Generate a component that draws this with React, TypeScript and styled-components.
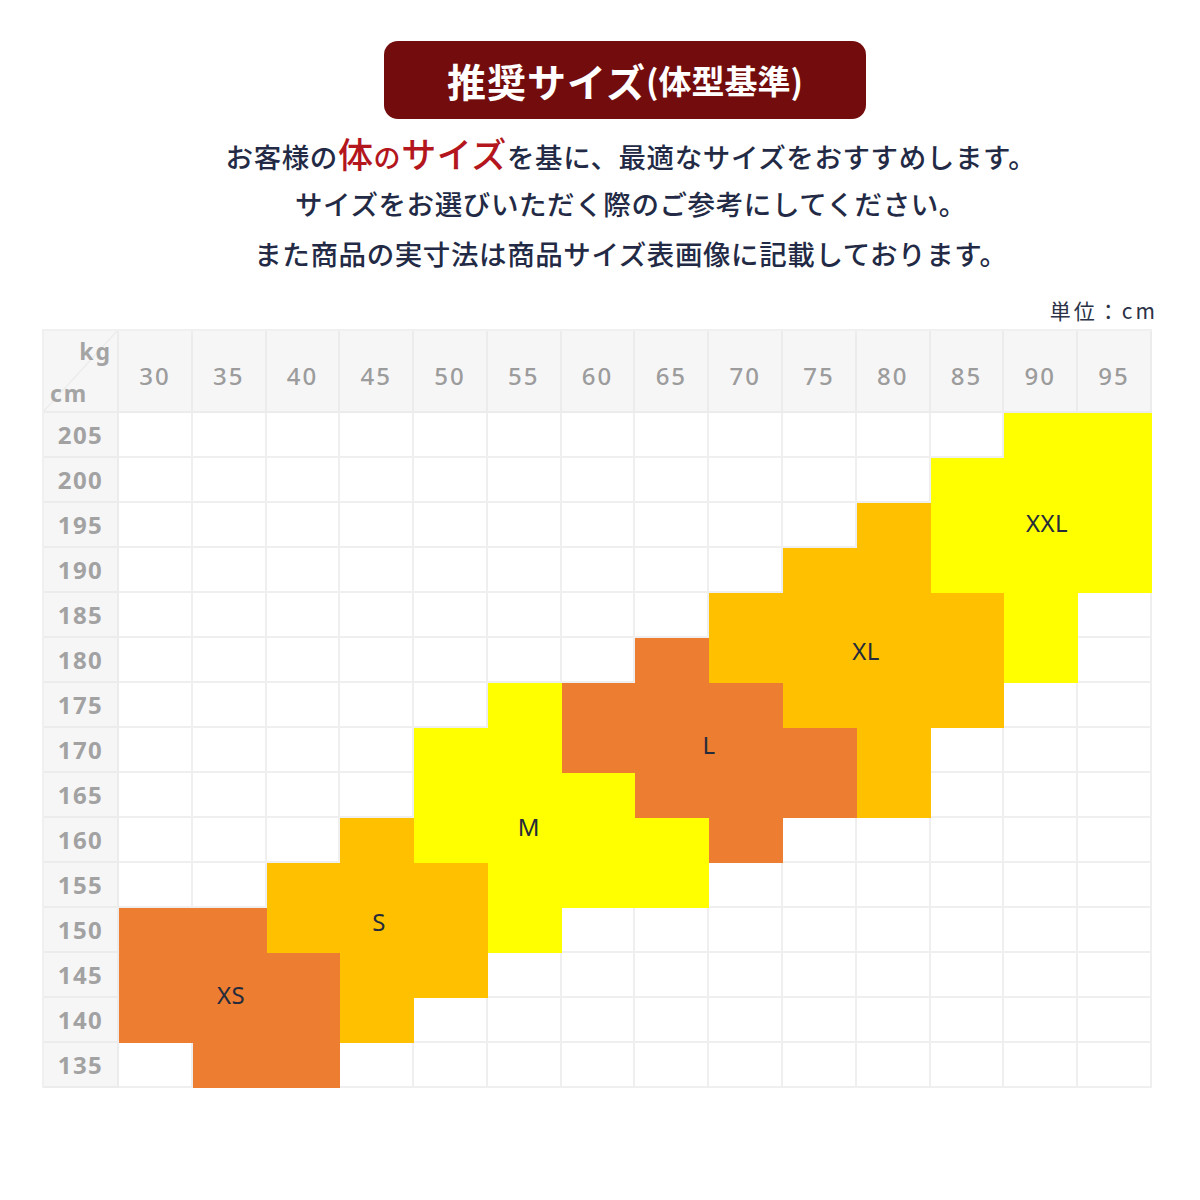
import React from "react";
import styled, { createGlobalStyle } from "styled-components";

const Global = createGlobalStyle`
  html, body { margin: 0; padding: 0; background: #ffffff; }
  body { font-family: "Noto Sans", "Noto Sans CJK JP", sans-serif; }
`;

const Page = styled.div`
  width: 1200px;
  height: 1200px;
  box-sizing: border-box;
  padding: 41px 0 0 42px;
  display: flex;
  flex-direction: column;
  align-items: flex-start;
  background: #fff;
`;

const Intro = styled.section`
  width: 1110px;
  padding-left: 56px;
  box-sizing: border-box;
  display: flex;
  flex-direction: column;
  align-items: center;
`;

const Banner = styled.h1`
  margin: 0;
  width: 482px;
  height: 78px;
  border-radius: 14px;
  background: #730d0d;
  color: #fff;
  display: flex;
  align-items: center;
  justify-content: center;
  font-family: "Noto Sans CJK JP", sans-serif;
  font-weight: 700;
  font-size: 39px;
  letter-spacing: 1px;
`;

const BannerSub = styled.span`
  font-size: 33px;
  letter-spacing: 0;
`;

const Lead = styled.div`
  margin-top: 9px;
  margin-left: 12px;
  display: flex;
  flex-direction: column;
  align-items: center;
`;

const Line = styled.p`
  margin: 0;
  height: 50px;
  line-height: 50px;
  font-family: "Noto Sans CJK JP", sans-serif;
  font-size: 27.5px;
  font-weight: 500;
  color: #232a45;
  letter-spacing: 0.6px;
  white-space: nowrap;
`;

const Emph = styled.span<{ $small?: boolean }>`
  color: #b3161d;
  font-size: ${(p) => (p.$small ? "27px" : "35px")};
  font-weight: 500;
`;

const UnitRow = styled.div`
  width: 1116px;
  margin-top: 20px;
  display: flex;
  justify-content: flex-end;
  font-family: "Noto Sans CJK JP", sans-serif;
  font-size: 21px;
  line-height: 24px;
  color: #2b3146;
  letter-spacing: 3px;
`;

const ChartWrap = styled.div`
  position: relative;
  margin-top: 7px;
  width: 1110px;
`;

const Grid = styled.div`
  display: grid;
  grid-template-columns: 75px repeat(14, 1fr);
  grid-template-rows: 82px repeat(15, 45px);
  border-top: 2px solid #f0f0f0;
  border-left: 2px solid #f0f0f0;
  box-sizing: border-box;
`;

const HeadCell = styled.div`
  background: #f6f6f7;
  border-right: 2px solid #ececec;
  border-bottom: 2px solid #ececec;
  display: flex;
  align-items: center;
  justify-content: center;
  font-size: 24px;
  font-weight: 500;
  color: #9c9c9c;
  letter-spacing: 2px;
  padding-top: 8px;
  box-sizing: border-box;
`;

const Corner = styled.div`
  position: relative;
  background: linear-gradient(
    to bottom right,
    #f6f6f7 calc(50% - 1px),
    #e8e8e8 50%,
    #f6f6f7 calc(50% + 1px)
  );
  border-right: 2px solid #ececec;
  border-bottom: 2px solid #ececec;
  box-sizing: border-box;
  font-size: 23px;
  font-weight: 700;
  color: #a4a4a4;
  letter-spacing: 2px;
`;

const CornerKg = styled.span`
  position: absolute;
  right: 5px;
  top: 4px;
`;

const CornerCm = styled.span`
  position: absolute;
  left: 6px;
  bottom: 2px;
`;

const RowHead = styled.div`
  background: #f6f6f7;
  border-right: 2px solid #ececec;
  border-bottom: 2px solid #ececec;
  display: flex;
  align-items: center;
  justify-content: center;
  font-size: 24px;
  font-weight: 700;
  color: #a2a2a2;
  letter-spacing: 1.5px;
  padding-bottom: 1px;
  box-sizing: border-box;
`;

const Cell = styled.div<{ $fill?: string }>`
  background: ${(p) => p.$fill ?? "#ffffff"};
  border-right: 2px solid ${(p) => p.$fill ?? "#efefef"};
  border-bottom: 2px solid ${(p) => p.$fill ?? "#efefef"};
  box-sizing: border-box;
`;

const SizeLabel = styled.span`
  position: absolute;
  transform: translate(-50%, -50%);
  font-size: 24px;
  font-weight: 400;
  color: #252b3b;
  letter-spacing: 0.5px;
  pointer-events: none;
`;

const ORANGE = "#ed7d31";
const GOLD = "#ffc000";
const YELLOW = "#ffff00";

const sizeColor: Record<string, string> = {
  XS: ORANGE,
  S: GOLD,
  M: YELLOW,
  L: ORANGE,
  XL: GOLD,
  XXL: YELLOW,
};

const weights = [30, 35, 40, 45, 50, 55, 60, 65, 70, 75, 80, 85, 90, 95];
const heights = [205, 200, 195, 190, 185, 180, 175, 170, 165, 160, 155, 150, 145, 140, 135];

// [size, fromCol, toCol] per row
const bands: [string, number, number][][] = [
  [["XXL", 12, 13]],
  [["XXL", 11, 13]],
  [["XL", 10, 10], ["XXL", 11, 13]],
  [["XL", 9, 10], ["XXL", 11, 13]],
  [["XL", 8, 11], ["XXL", 12, 12]],
  [["L", 7, 7], ["XL", 8, 11], ["XXL", 12, 12]],
  [["M", 5, 5], ["L", 6, 8], ["XL", 9, 11]],
  [["M", 4, 5], ["L", 6, 9], ["XL", 10, 10]],
  [["M", 4, 6], ["L", 7, 9], ["XL", 10, 10]],
  [["S", 3, 3], ["M", 4, 7], ["L", 8, 8]],
  [["S", 2, 4], ["M", 5, 7]],
  [["XS", 0, 1], ["S", 2, 4], ["M", 5, 5]],
  [["XS", 0, 2], ["S", 3, 4]],
  [["XS", 0, 2], ["S", 3, 3]],
  [["XS", 1, 2]],
];

const labels: { text: string; x: number; y: number }[] = [
  { text: "XXL", x: 1005, y: 193 },
  { text: "XL", x: 824, y: 321 },
  { text: "L", x: 667, y: 415 },
  { text: "M", x: 487, y: 497 },
  { text: "S", x: 337, y: 592 },
  { text: "XS", x: 189, y: 665 },
];

function fillFor(row: number, col: number): string | undefined {
  for (const [size, a, b] of bands[row]) {
    if (col >= a && col <= b) return sizeColor[size];
  }
  return undefined;
}

export default function App() {
  return (
    <>
      <Global />
      <Page>
        <Intro>
          <Banner>
            推奨サイズ<BannerSub>(体型基準)</BannerSub>
          </Banner>
          <Lead>
            <Line>
              お客様の<Emph>体</Emph>
              <Emph $small>の</Emph>
              <Emph>サイズ</Emph>を基に、最適なサイズをおすすめします。
            </Line>
            <Line>サイズをお選びいただく際のご参考にしてください。</Line>
            <Line>また商品の実寸法は商品サイズ表画像に記載しております。</Line>
          </Lead>
        </Intro>
        <UnitRow>単位：cm</UnitRow>
        <ChartWrap>
          <Grid>
            <Corner>
              <CornerKg>kg</CornerKg>
              <CornerCm>cm</CornerCm>
            </Corner>
            {weights.map((w) => (
              <HeadCell key={w}>{w}</HeadCell>
            ))}
            {heights.map((h, r) => (
              <React.Fragment key={h}>
                <RowHead>{h}</RowHead>
                {weights.map((w, c) => (
                  <Cell key={w} $fill={fillFor(r, c)} />
                ))}
              </React.Fragment>
            ))}
          </Grid>
          {labels.map((l) => (
            <SizeLabel key={l.text} style={{ left: l.x, top: l.y }}>
              {l.text}
            </SizeLabel>
          ))}
        </ChartWrap>
      </Page>
    </>
  );
}
